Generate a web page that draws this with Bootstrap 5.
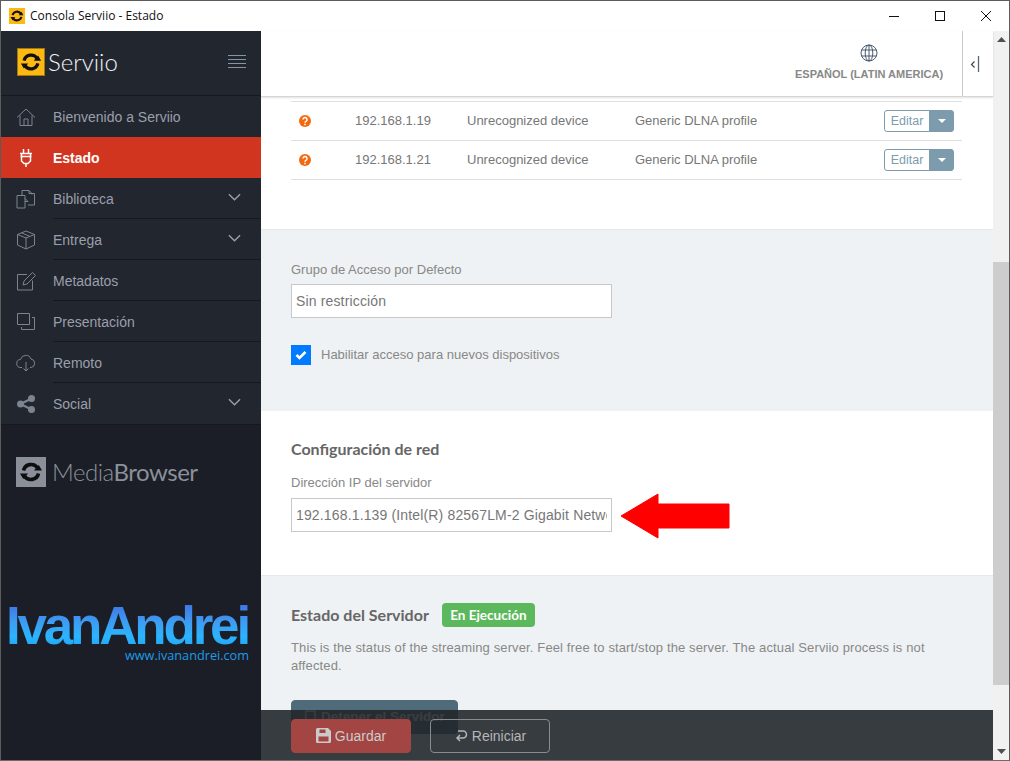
<!DOCTYPE html>
<html lang="es">
<head>
  <meta charset="UTF-8" />
  <meta name="viewport" content="width=device-width, initial-scale=1.0"/>
  <title>Consola Serviio - Estado</title>
  <link href="https://cdn.jsdelivr.net/npm/bootstrap@5.3.0/dist/css/bootstrap.min.css" rel="stylesheet">
  <style>
    html, body { height: 100%; overflow: hidden; }
    body { background: #fff; font-family: "Liberation Sans", Arial, sans-serif; font-size: 14px; color: #777; }

    .app-window { height: 761px; border: 1px solid #5c5c5c; border-bottom-color: #6b6b6b; }
    .title-bar { height: 30px; flex: none; background: #fff; color: #111; font-family: "Open Sans", sans-serif; font-size: 12px; padding-left: 8px; }
    .title-bar .title-text { margin-left: 5px; }
    .win-btn { width: 46px; height: 30px; }
    .app-body { min-height: 0; }

    /* sidebar */
    .side-panel { width: 260px; flex: none; background: #1b1e26; }
    .side-head { height: 65px; background: #22262f; border-bottom: 1px solid #15181e; padding: 0 15px 3px 16px; }
    .side-name { font-family: Lato, sans-serif; font-weight: 300; font-size: 24px; color: #f1f3f5; margin-left: 3px; line-height: 1; }
    .burger { width: 18px; }
    .burger i { display: block; height: 1px; background: #8794a3; margin: 3px 0; }
    .side-menu { background: #22262f; border-bottom: 1px solid #15181e; }
    .side-item { height: 41px; padding-left: 15px; padding-top: 1px; color: #9a9fab; font-size: 14px; }
    .side-item .ico { width: 20px; height: 20px; flex: none; color: #7d8491; margin-right: 17px; }
    .side-item .lbl { flex: 1; height: 100%; display: flex; align-items: center; border-bottom: 1px solid #15181e; padding-top: 1px; padding-right: 20px; justify-content: space-between; }
    .side-item.no-line .lbl { border-bottom: 0; padding-top: 0; }
    .side-item.active { background: #d2351f; color: #fff; }
    .side-item.active .ico { color: #fff; }
    .chev { width: 13px; height: 8px; color: #9aa0ab; margin-top: -5px; }
    .media-logo { margin: 31px 0 0 15px; height: 31px; }
    .media-name { font-family: Lato, sans-serif; font-size: 24px; line-height: 1; color: #8b909a; margin-left: 6px; letter-spacing: -.5px; }
    .media-name span { font-weight: 300; }
    .author-logo { margin-top: 118px; padding-left: 5px; }
    .author-name { font-family: "Liberation Sans", sans-serif; font-weight: 700; font-size: 53px; line-height: 42px; letter-spacing: -3.2px; background: linear-gradient(180deg, #3f77e4 0%, #3d9cf2 40%, #2bb4ff 75%, #22a6f5 100%); -webkit-background-clip: text; background-clip: text; color: transparent; }
    .author-url { font-family: "Open Sans", sans-serif; font-size: 12.7px; line-height: 14px; color: #1f9be8; text-align: right; width: 243px; margin-top: 1px; }

    /* main */
    .main-col { min-width: 0; }
    .top-strip { height: 66px; flex: none; background: #fff; border-bottom: 1px solid #d5d5d5; box-shadow: 0 1px 2px rgba(0,0,0,.12); z-index: 2; }
    .lang-box { width: 150px; margin-right: 18px; color: #888; font-size: 11px; font-weight: 700; text-align: center; white-space: nowrap; }
    .lang-box svg { display: block; margin: 0 auto 4px; }
    .collapse-tog { width: 31px; height: 100%; border-left: 1px solid #c9c9c9; color: #566476; }
    .collapse-tog svg { margin-right: 6px; }
    .scroll-area { min-height: 0; overflow: hidden; }
    .pane { padding-left: 30px; padding-right: 31px; }
    .pane-white { background: #fff; }
    .pane-grey { background: #eef2f4; }
    .pane-devices { height: 133px; padding-top: 4px; border-bottom: 1px solid #e6e9eb; }
    .pane-access { height: 181px; padding-top: 33px; }
    .pane-access .field-label { margin-bottom: 7px; }
    .pane-net { height: 165px; padding-top: 29px; border-bottom: 1px solid #e6e9eb; }
    .pane-status { height: 190px; padding-top: 27px; }

    .dev-table { table-layout: fixed; margin: 0; color: #777; font-size: 13px; border-top: 1px solid #dfdfdf; }
    .dev-table td { height: 39px; padding: 0; vertical-align: middle; border-bottom: 1px solid #dfdfdf; color: #777; }
    .dev-table .c-ico { width: 64px; padding-left: 8px; }
    .dev-table .c-ip { width: 112px; }
    .dev-table .c-dev { width: 168px; }
    .dev-table .c-act { width: 180px; text-align: right; padding-right: 8px; }
    .q-mark { width: 12px; height: 12px; display: block; }
    .edit-group { vertical-align: top; }
    .edit-group .btn { font-size: 12.5px; height: 22px; padding: 0; line-height: 20px; border-color: #7c9cae; border-radius: 3px; }
    .edit-main { width: 46px; color: #7c9cae; background: #fff; }
    .edit-drop { width: 25px; background: #7c9cae; color: #fff; display: flex; align-items: center; justify-content: center; }
    .edit-drop i { border-top: 4px solid #fff; border-left: 4px solid transparent; border-right: 4px solid transparent; }

    .field-label { font-size: 13px; color: #888; line-height: 14px; margin-bottom: 8px; }
    .field-input.form-control { width: 321px; height: 34px; border-radius: 0; border: 1px solid #c8c8c8; padding: 0 4px; font-size: 14px; letter-spacing: .15px; color: #777; background: #fff; box-shadow: none; }
    .check-row { margin-top: 27px; font-size: 13px; color: #888; }
    .check-sq { width: 20px; height: 20px; background: #007bff; margin-right: 10px; }
    .pane-head { font-family: Lato, sans-serif; font-weight: 700; font-size: 16px; color: #666; margin: 0; line-height: 18px; }
    .pane-net .pane-head { margin-bottom: 18px; }
    .state-pill.badge { margin-left: 13px; background: #5cb85c; font-family: Lato, sans-serif; font-weight: 700; font-size: 13.5px; padding: 0; width: 93px; height: 24px; line-height: 24px; border-radius: 4px; }
    .status-text { font-size: 13px; letter-spacing: .13px; line-height: 18px; color: #888; margin: 12px 0 0; width: 650px; }
    .stop-btn.btn { margin-top: 25px; width: 167px; height: 34px; background: #4f6b7a; border-color: #4f6b7a; border-radius: 4px; color: #fff; font-weight: 700; font-size: 13.5px; padding: 6px 0; }

    .arrow-mark { margin: -5px 0 -7px 8px; }

    /* footer floats over the scrolled content */
    .save-bar { position: absolute; left: 0; right: 0; bottom: 0; height: 50px; background: rgba(33,37,42,.89); padding-left: 30px; z-index: 3; }
    .save-bar .btn { width: 120px; height: 34px; font-size: 14px; padding: 0; border-radius: 4px; margin-top: 2px; }
    .save-btn { background: #a34542; border-color: #a34542; color: #cbcbcb; }
    .reset-btn { background: transparent; border-color: #8a8c90; color: #b4b6b9; margin-left: 19px; }
    .save-bar svg { vertical-align: -2px; margin-right: 4px; }

    /* scrollbar */
    .fake-scroll { width: 16px; flex: none; background: #f1f1f1; }
    .scroll-arrow { height: 17px; color: #505050; }
    .scroll-gap { height: 214px; flex: none; }
    .scroll-thumb { height: 423px; flex: none; background: #cdcdcd; }
  </style>
</head>
<body>
  <svg width="0" height="0" class="d-block" aria-hidden="true">
    <symbol id="sync-ring" viewBox="0 0 24 24">
      <path d="M4.500 10.500A7.800 7.800 0 0 1 18.600 8" fill="none" stroke="currentColor" stroke-width="3.600"/>
      <path d="M19.500 13.500A7.800 7.800 0 0 1 5.400 16" fill="none" stroke="currentColor" stroke-width="3.600"/>
      <path d="M15 10.500h8l-3.200-5.600z M9 13.500H1l3.200 5.600z" fill="currentColor"/>
    </symbol>
  </svg>

  <div class="app-window d-flex flex-column">
    <div class="title-bar d-flex align-items-center">
      <svg width="16" height="16" viewBox="0 0 16 16"><rect width="16" height="16" fill="#fdb913"/><use href="#sync-ring" x="1" y="1" width="14" height="14" color="#111"/></svg>
      <span class="title-text flex-grow-1">Consola Serviio - Estado</span>
      <div class="win-btn d-flex align-items-center justify-content-center"><svg width="10" height="10"><path d="M0 5.500h10" stroke="#111"/></svg></div>
      <div class="win-btn d-flex align-items-center justify-content-center"><svg width="10" height="10"><rect x=".5" y=".5" width="9" height="9" fill="none" stroke="#111"/></svg></div>
      <div class="win-btn d-flex align-items-center justify-content-center"><svg width="10" height="10"><path d="M0 0l10 10M10 0L0 10" stroke="#111"/></svg></div>
    </div>

    <div class="app-body d-flex flex-grow-1">
      <aside class="side-panel d-flex flex-column">
        <div class="side-head d-flex align-items-center">
          <svg width="28" height="28" viewBox="0 0 28 28"><rect x=".5" y=".5" width="27" height="27" fill="#fdb913" stroke="#a07a10"/><use href="#sync-ring" x="3" y="3" width="22" height="22" color="#111"/></svg>
          <span class="side-name flex-grow-1">Serviio</span>
          <div class="burger"><i></i><i></i><i></i><i></i></div>
        </div>

        <div class="side-menu">
          <div class="side-item no-line d-flex align-items-center">
            <svg class="ico" viewBox="0 0 20 20" fill="none" stroke="currentColor"><path d="M1 10.500L10 2l9 8.500M4 8.500V18.500H16V8.500M8 18.500V12h4v6.500"/></svg>
            <div class="lbl">Bienvenido a Serviio</div>
          </div>
          <div class="side-item active no-line d-flex align-items-center">
            <svg class="ico" viewBox="0 0 20 20" fill="none" stroke="currentColor" stroke-width="1.500"><path d="M7.500 1v4.500M12.500 1v4.500M4 5.500h12M4.500 8.500h11M5.500 5.500v7.500l2.500 2.500h4l2.500-2.500V5.500M10 15.500V19"/></svg>
            <div class="lbl fw-bold">Estado</div>
          </div>
          <div class="side-item d-flex align-items-center">
            <svg class="ico" viewBox="0 0 20 20" fill="none" stroke="currentColor"><path d="M1 6.500h8v12.500H1zM9 9.500l3 3h-3M6 6.500V1.500h7l3 3v1M13 1.500v3h5.500V16H12"/></svg>
            <div class="lbl">Biblioteca <svg class="chev" viewBox="0 0 14 8" fill="none" stroke="currentColor" stroke-width="1.500"><path d="M1 1l6 6 6-6"/></svg></div>
          </div>
          <div class="side-item d-flex align-items-center">
            <svg class="ico" viewBox="0 0 20 20" fill="none" stroke="currentColor"><path d="M10 1l8.500 3.500V15L10 19l-8.500-4V4.500zM1.500 4.500L10 8l8.500-3.500M10 8v11M5.500 2.800L14 6.500"/></svg>
            <div class="lbl">Entrega <svg class="chev" viewBox="0 0 14 8" fill="none" stroke="currentColor" stroke-width="1.500"><path d="M1 1l6 6 6-6"/></svg></div>
          </div>
          <div class="side-item d-flex align-items-center">
            <svg class="ico" viewBox="0 0 20 20" fill="none" stroke="currentColor"><path d="M11 3.500H1.500V19h15V9.500M7 14l1-4 8.500-8.500 3 3L11 13z"/></svg>
            <div class="lbl">Metadatos</div>
          </div>
          <div class="side-item d-flex align-items-center">
            <svg class="ico" viewBox="0 0 20 20" fill="none" stroke="currentColor"><path d="M1.500 1.500h12v11h-12zM16 5.500h2.500v12h-13V15"/></svg>
            <div class="lbl">Presentación</div>
          </div>
          <div class="side-item d-flex align-items-center">
            <svg class="ico" viewBox="0 0 20 20" fill="none" stroke="currentColor"><path d="M6 14.500H5a4 4 0 0 1-.5-8A5.500 5.500 0 0 1 15 6a4.300 4.300 0 0 1 0 8.500h-1M10 9v9M7.500 15.500L10 18l2.500-2.500"/></svg>
            <div class="lbl">Remoto</div>
          </div>
          <div class="side-item no-line d-flex align-items-center">
            <svg class="ico" viewBox="0 0 20 20" fill="currentColor"><circle cx="15.500" cy="4.500" r="3.500"/><circle cx="15.500" cy="15.500" r="3.500"/><circle cx="4.500" cy="10" r="3.500"/><path d="M4.500 10L15.500 4.500M4.500 10l11 5.500" stroke="currentColor" stroke-width="2"/></svg>
            <div class="lbl">Social <svg class="chev" viewBox="0 0 14 8" fill="none" stroke="currentColor" stroke-width="1.500"><path d="M1 1l6 6 6-6"/></svg></div>
          </div>
        </div>

        <div class="media-logo d-flex align-items-center">
          <svg width="30" height="30" viewBox="0 0 30 30"><rect width="30" height="30" fill="#8a8f99"/><use href="#sync-ring" x="3" y="3" width="24" height="24" color="#0d0e10"/></svg>
          <span class="media-name"><span>Media</span>Browser</span>
        </div>

        <div class="author-logo">
          <div class="author-name">IvanAndrei</div>
          <div class="author-url">www.ivanandrei.com</div>
        </div>
      </aside>

      <div class="main-col d-flex flex-column flex-grow-1 position-relative">
        <div class="top-strip d-flex align-items-center justify-content-end">
          <div class="lang-box">
            <svg width="18" height="18" viewBox="0 0 18 18" fill="none" stroke="#4a5a6c"><circle cx="9" cy="9" r="8"/><ellipse cx="9" cy="9" rx="3.800" ry="8"/><path d="M9 1v16M1.500 6h15M1.500 12h15"/></svg>
            ESPAÑOL (LATIN AMERICA)
          </div>
          <div class="collapse-tog d-flex align-items-center justify-content-center">
            <svg width="11" height="18" viewBox="0 0 11 18" fill="none"><path d="M4.500 6.500L1.500 9.500l3 3" stroke="#444" stroke-width="1.200"/><path d="M8.500 1v16" stroke="#566476" stroke-width="1.300"/></svg>
          </div>
        </div>

        <div class="scroll-area flex-grow-1">
          <section class="pane pane-white pane-devices">
            <table class="table dev-table">
              <tbody>
                <tr>
                  <td class="c-ico"><svg class="q-mark" viewBox="0 0 12 12"><circle cx="6" cy="6" r="6" fill="#f26a0f"/><path d="M4 4.600a2 2 0 1 1 3 1.700c-.8.400-1 .7-1 1.400" fill="none" stroke="#fff" stroke-width="1.500"/><path d="M5.200 8.800h1.600v1.400H5.200z" fill="#fff"/></svg></td>
                  <td class="c-ip">192.168.1.19</td>
                  <td class="c-dev">Unrecognized device</td>
                  <td>Generic DLNA profile</td>
                  <td class="c-act"><div class="btn-group edit-group"><button type="button" class="btn edit-main">Editar</button><button type="button" class="btn edit-drop"><i></i></button></div></td>
                </tr>
                <tr>
                  <td class="c-ico"><svg class="q-mark" viewBox="0 0 12 12"><circle cx="6" cy="6" r="6" fill="#f26a0f"/><path d="M4 4.600a2 2 0 1 1 3 1.700c-.8.400-1 .7-1 1.400" fill="none" stroke="#fff" stroke-width="1.500"/><path d="M5.200 8.800h1.600v1.400H5.200z" fill="#fff"/></svg></td>
                  <td class="c-ip">192.168.1.21</td>
                  <td class="c-dev">Unrecognized device</td>
                  <td>Generic DLNA profile</td>
                  <td class="c-act"><div class="btn-group edit-group"><button type="button" class="btn edit-main">Editar</button><button type="button" class="btn edit-drop"><i></i></button></div></td>
                </tr>
              </tbody>
            </table>
          </section>

          <section class="pane pane-grey pane-access">
            <div class="field-label">Grupo de Acceso por Defecto</div>
            <input class="form-control field-input" type="text" value="Sin restricción" readonly>
            <div class="check-row d-flex align-items-center">
              <div class="check-sq d-flex align-items-center justify-content-center"><svg width="12" height="10" viewBox="0 0 12 10"><path d="M1.500 5l3 3L10.500 2" fill="none" stroke="#fff" stroke-width="2.600"/></svg></div>
              Habilitar acceso para nuevos dispositivos
            </div>
          </section>

          <section class="pane pane-white pane-net">
            <h2 class="pane-head">Configuración de red</h2>
            <div class="field-label">Dirección IP del servidor</div>
            <div class="d-flex align-items-center">
              <input class="form-control field-input" type="text" value="192.168.1.139 (Intel(R) 82567LM-2 Gigabit Network Connection)" readonly>
              <svg class="arrow-mark" width="110" height="46" viewBox="0 0 110 46"><path d="M1 23L38 1v10h71v24H38v10z" fill="#f00" stroke="#f00" stroke-linejoin="round"/></svg>
            </div>
          </section>

          <section class="pane pane-grey pane-status">
            <div class="d-flex align-items-center">
              <h2 class="pane-head">Estado del Servidor</h2>
              <span class="badge state-pill">En Ejecución</span>
            </div>
            <p class="status-text">This is the status of the streaming server. Feel free to start/stop the server. The actual Serviio process is not affected.</p>
            <button type="button" class="btn stop-btn">☐ Detener el Servidor</button>
          </section>
        </div>

        <div class="save-bar d-flex align-items-center">
          <button type="button" class="btn save-btn"><svg width="15" height="15" viewBox="0 0 15 15"><path d="M0 1.500A1.500 1.500 0 0 1 1.500 0H12l3 3v10.500a1.500 1.500 0 0 1-1.500 1.500h-12A1.500 1.500 0 0 1 0 13.500z" fill="#cbcbcb"/><path d="M3.500 1.500h6v3.500h-6zM2.500 8.500h10v5h-10z" fill="#a34542"/></svg>Guardar</button>
          <button type="button" class="btn reset-btn"><svg width="14" height="14" viewBox="0 0 14 14" fill="none" stroke="#b4b6b9" stroke-width="1.500"><path d="M4 2h5a3.500 3.500 0 0 1 0 7H3M6 6L3 9l3 3"/></svg>Reiniciar</button>
        </div>
      </div>

      <div class="fake-scroll d-flex flex-column">
        <div class="scroll-arrow d-flex align-items-center justify-content-center"><svg width="9" height="5"><path d="M0 5L4.500 0 9 5z" fill="currentColor"/></svg></div>
        <div class="scroll-gap"></div>
        <div class="scroll-thumb"></div>
        <div class="flex-grow-1"></div>
        <div class="scroll-arrow d-flex align-items-center justify-content-center"><svg width="9" height="5"><path d="M0 0L4.500 5 9 0z" fill="currentColor"/></svg></div>
      </div>
    </div>
  </div>
  <script src="https://cdn.jsdelivr.net/npm/bootstrap@5.3.0/dist/js/bootstrap.bundle.min.js"></script>
</body>
</html>
